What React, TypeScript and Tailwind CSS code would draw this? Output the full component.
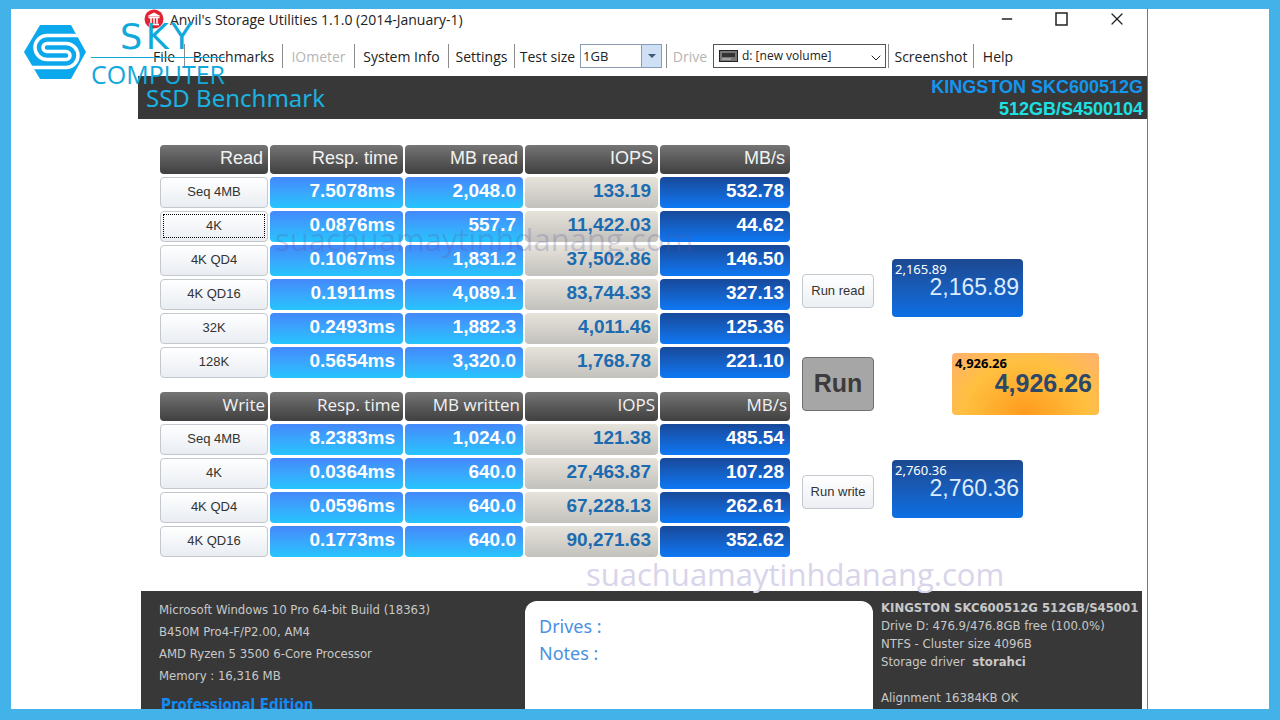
import React from 'react';
import { ChevronDown, Minus, X } from 'lucide-react';

interface ResultRow {
  test: string;
  resp: string;
  mb: string;
  iops: string;
  speed: string;
  focused?: boolean;
}

interface ResultTableProps {
  title: string;
  mbLabel: string;
  rows: ResultRow[];
  headClass: string;
}

const readRows: ResultRow[] = [
  { test: 'Seq 4MB', resp: '7.5078ms', mb: '2,048.0', iops: '133.19', speed: '532.78' },
  { test: '4K', resp: '0.0876ms', mb: '557.7', iops: '11,422.03', speed: '44.62', focused: true },
  { test: '4K QD4', resp: '0.1067ms', mb: '1,831.2', iops: '37,502.86', speed: '146.50' },
  { test: '4K QD16', resp: '0.1911ms', mb: '4,089.1', iops: '83,744.33', speed: '327.13' },
  { test: '32K', resp: '0.2493ms', mb: '1,882.3', iops: '4,011.46', speed: '125.36' },
  { test: '128K', resp: '0.5654ms', mb: '3,320.0', iops: '1,768.78', speed: '221.10' },
];

const writeRows: ResultRow[] = [
  { test: 'Seq 4MB', resp: '8.2383ms', mb: '1,024.0', iops: '121.38', speed: '485.54' },
  { test: '4K', resp: '0.0364ms', mb: '640.0', iops: '27,463.87', speed: '107.28' },
  { test: '4K QD4', resp: '0.0596ms', mb: '640.0', iops: '67,228.13', speed: '262.61' },
  { test: '4K QD16', resp: '0.1773ms', mb: '640.0', iops: '90,271.63', speed: '352.62' },
];

const Logo: React.FC = () => (
  <div className="absolute left-3 top-2 z-10 flex items-start gap-1 text-[#0fa9dc]">
    <svg viewBox="0 0 64 56" className="mt-[7px] h-14 w-16" aria-hidden="true">
      <path d="M17 1h31l15 27-15 27H17L1 28z" fill="#0ba8ee" />
      <path
        d="M58 11.5H24a12 12 0 0 0 0 24h19a4 4 0 0 0 0-8H24a4 4 0 0 1 0-8h19a12 12 0 0 1 0 24H6"
        fill="none"
        stroke="#fff"
        strokeWidth="3.5"
      />
    </svg>
    <div className="flex flex-col items-center">
      <span className="font-['DejaVu_Sans'] text-[35px] leading-10 tracking-widest">SKY</span>
      <span className="h-px w-full bg-[#0fa9dc]" />
      <span className="font-['Open_Sans'] text-[25px] leading-8">COMPUTER</span>
    </div>
  </div>
);

const TitleBar: React.FC = () => (
  <header className="flex h-5 items-center pl-1.5 pr-5">
    <svg viewBox="0 0 20 20" className="h-5 w-5" aria-hidden="true">
      <circle cx="10" cy="10" r="9.5" fill="#e02435" />
      <path d="M4.5 7 10 4l5.5 3z" fill="#fff" stroke="#fff" />
      <path d="M4.5 8.5h11M5 15.5h10M7 8v6.5M10 8v6.5M13 8v6.5" stroke="#fff" strokeWidth="1.5" />
    </svg>
    <h1 className="ml-1.5 text-[14px]">Anvil's Storage Utilities 1.1.0 (2014-January-1)</h1>
    <div className="ml-auto flex items-center gap-[38px]">
      <button aria-label="Minimize"><Minus size={16} /></button>
      <button aria-label="Maximize">
        <svg viewBox="0 0 16 16" className="h-4 w-4">
          <rect x="3" y="2" width="11" height="12" fill="none" stroke="currentColor" strokeWidth="1.5" />
        </svg>
      </button>
      <button aria-label="Close"><X size={20} strokeWidth={1.5} /></button>
    </div>
  </header>
);

const Separator: React.FC = () => <span className="h-6 w-px shrink-0 bg-[#8c8c8c]" />;

const Toolbar: React.FC = () => (
  <nav className="flex h-[47px] items-center whitespace-nowrap pl-1.5 pt-[7px] text-[14px]">
    <button className="w-10">File</button>
    <Separator />
    <button className="w-[97px]">Benchmarks</button>
    <Separator />
    <button className="w-[71px] text-[#b5b5b5]" disabled>IOmeter</button>
    <Separator />
    <button className="w-[93px]">System Info</button>
    <Separator />
    <button className="w-[65px]">Settings</button>
    <Separator />
    <label htmlFor="test-size" className="w-[65px] text-center">Test size</label>
    <div className="relative">
      <select id="test-size" className="h-6 w-[82px] appearance-none border border-[#8a9bb5] bg-white px-0.5 text-[13px] leading-5">
        <option>1GB</option>
      </select>
      <span className="pointer-events-none absolute bottom-px right-px top-px flex w-5 items-center justify-center border-l border-[#8a9bb5] bg-[#cfe0f5]">
        <svg viewBox="0 0 8 4" className="h-1 w-2"><path d="M0 0h8L4 4z" fill="#3d5878" /></svg>
      </span>
    </div>
    <span className="w-1" />
    <Separator />
    <label htmlFor="drive" className="w-[46px] text-center text-[#b5b5b5]">Drive</label>
    <div className="relative">
      <select id="drive" className="h-6 w-[173px] appearance-none border border-[#555] bg-white pl-7 text-[12px]">
        <option>d: [new volume]</option>
      </select>
      <svg viewBox="0 0 19 12" className="pointer-events-none absolute left-1.5 top-1.5 h-3 w-[19px]" aria-hidden="true">
        <rect x="0.5" y="0.5" width="18" height="11" fill="#777" stroke="#222" />
        <path d="M3 3h13v4H3z" fill="#333" />
        <path d="M3 9h9" stroke="#ccc" />
      </svg>
      <ChevronDown size={16} strokeWidth={1.5} className="pointer-events-none absolute right-0.5 top-1.5" />
    </div>
    <span className="w-0.5" />
    <Separator />
    <button className="w-[84px]">Screenshot</button>
    <Separator />
    <button className="w-12">Help</button>
  </nav>
);

const ResultTable: React.FC<ResultTableProps> = ({ title, mbLabel, rows, headClass }) => (
  <table className="w-[634px] table-fixed border-separate border-spacing-x-[2px] border-spacing-y-[3px] text-right">
    <colgroup>
      <col className="w-[108px]" />
      <col className="w-[133px]" />
      <col className="w-[118px]" />
      <col className="w-[133px]" />
      <col className="w-[130px]" />
    </colgroup>
    <thead className={headClass}>
      <tr className="h-[29px] text-[#f2f2f2]">
        {[title, 'Resp. time', mbLabel, 'IOPS', 'MB/s'].map((label) => (
          <th key={label} className="rounded-sm bg-linear-to-b from-[#757575] to-[#404040] pb-1 pl-1 text-right font-normal leading-6">
            {label}
          </th>
        ))}
      </tr>
    </thead>
    <tbody className="font-['Liberation_Sans'] text-[19px] font-bold leading-6 text-white">
      {rows.map((row) => (
        <tr key={row.test} className="h-[31px]">
          <td className="p-0">
            <button className="flex h-[31px] w-full items-center justify-center rounded-sm border border-[#c3c8ce] bg-linear-to-b from-white to-[#e9edf2] px-0.5 pb-[3px] pt-0.5 text-[13px] font-normal text-[#333]">
              <span className={row.focused ? 'flex h-full w-full items-center justify-center border border-dotted border-black' : ''}>
                {row.test}
              </span>
            </button>
          </td>
          <td className="rounded-sm bg-linear-to-b from-[#4488fb] to-[#25c4fd] py-0 pb-[3px] pr-2">{row.resp}</td>
          <td className="rounded-sm bg-linear-to-b from-[#4488fb] to-[#25c4fd] py-0 pb-[3px] pr-[7px]">{row.mb}</td>
          <td className="rounded-sm bg-linear-to-b from-[#e6e3db] to-[#c3c1bc] py-0 pb-[3px] pr-[7px] text-[#1c6bb0]">{row.iops}</td>
          <td className="rounded-sm bg-linear-to-b from-[#17499a] to-[#0b78f4] py-0 pb-[3px] pr-1.5">{row.speed}</td>
        </tr>
      ))}
    </tbody>
  </table>
);

const ScoreBox: React.FC<{ score: string }> = ({ score }) => (
  <div className="flex h-[58px] w-[131px] flex-col rounded-sm bg-linear-to-b from-[#1c4990] to-[#0a6fe4] pl-[3px] pr-1 pt-0.5 text-white">
    <span className="font-['Noto_Sans'] text-[13px] leading-4">{score}</span>
    <span className="text-right font-['Liberation_Sans'] text-[23px] leading-5 text-[#dcecff]">{score}</span>
  </div>
);

const smallButton =
  "mt-1.5 h-[34px] w-[72px] shrink-0 rounded-sm border border-[#c3c8ce] bg-linear-to-b from-white to-[#eceff3] font-['Liberation_Sans'] text-[13px] text-[#333]";

const RunPanel: React.FC = () => (
  <section className="flex flex-col pt-[117px]">
    <div className="flex items-center gap-[18px]">
      <button className={smallButton}>Run read</button>
      <ScoreBox score="2,165.89" />
    </div>
    <div className="mt-9 flex items-center gap-[78px]">
      <button className="h-[54px] w-[72px] rounded-sm border border-[#707070] bg-[#a6a6a6] font-['Liberation_Sans'] text-[25px] font-bold text-[#3c3c3c]">
        Run
      </button>
      <div className="flex h-[62px] w-[147px] flex-col rounded-sm bg-[radial-gradient(ellipse_at_bottom,#ff9a1c,#ffc040_60%,#ffb070)] px-[3px] pt-0.5">
        <span className="font-['Noto_Sans'] text-[13px] font-bold leading-4 text-black">4,926.26</span>
        <span className="pr-1 text-right font-['Liberation_Sans'] text-[25px] font-bold leading-6 text-[#2b4868]">4,926.26</span>
      </div>
    </div>
    <div className="mt-[45px] flex items-center gap-[18px]">
      <button className={smallButton}>Run write</button>
      <ScoreBox score="2,760.36" />
    </div>
  </section>
);

const SystemFooter: React.FC = () => (
  <footer className="ml-[3px] mr-[5px] flex flex-1 overflow-hidden bg-[#383838] font-['DejaVu_Sans_Condensed'] text-[13px] text-[#c8c8c8]">
    <div className="w-[384px] shrink-0 whitespace-nowrap pl-[18px] pt-2 leading-[22px]">
      <p>Microsoft Windows 10 Pro 64-bit Build (18363)</p>
      <p>B450M Pro4-F/P2.00, AM4</p>
      <p>AMD Ryzen 5 3500 6-Core Processor</p>
      <p>Memory : 16,316 MB</p>
      <p className="mt-1 pl-0.5 text-[15px] font-bold leading-7 text-[#138bf0]">Professional Edition</p>
    </div>
    <div className="mt-2.5 flex-1 rounded-t-xl bg-white px-3.5 pt-3 font-['Noto_Sans'] text-[18px] leading-[27px] text-[#4a90e2]">
      <p>Drives :</p>
      <p>Notes :</p>
    </div>
    <div className="w-[269px] shrink-0 overflow-hidden whitespace-nowrap pl-2 pt-2 leading-[18px]">
      <p className="font-bold">KINGSTON SKC600512G 512GB/S45001</p>
      <p>Drive D: 476.9/476.8GB free (100.0%)</p>
      <p>NTFS - Cluster size 4096B</p>
      <p>Storage driver &nbsp;<strong>storahci</strong></p>
      <p className="mt-[18px]">Alignment 16384KB OK</p>
    </div>
  </footer>
);

const watermark = "pointer-events-none absolute z-10 font-['Open_Sans'] text-[31px] leading-9";

export default function App() {
  return (
    <main className="relative flex h-screen min-h-[400px] overflow-hidden border-x-[11px] border-b-[11px] border-t-[9px] border-[#43b2e8] bg-white pl-[127px] pr-[121px] font-['Open_Sans',sans-serif] text-[#222]">
      <Logo />
      <div className="relative flex flex-1 flex-col border-r border-[#777]">
        <TitleBar />
        <Toolbar />
        <div className="flex h-[43px] items-center justify-between bg-[#383838] pl-2 pr-1">
          <h2 className="font-['Noto_Sans'] text-[24px] text-[#1ab2e0]">SSD Benchmark</h2>
          <div className="text-right font-['Liberation_Sans'] text-[18px] font-bold leading-[22px]">
            <p className="text-[#1496f0]">KINGSTON SKC600512G</p>
            <p className="text-[#1ce0e4]">512GB/S4500104</p>
          </div>
        </div>
        <div className="flex h-[472px] shrink-0 gap-2.5 pl-5 pt-[23px]">
          <div className="flex shrink-0 flex-col gap-2">
            <ResultTable title="Read" mbLabel="MB read" rows={readRows} headClass="font-['Liberation_Sans'] text-[18px] [&_th]:pr-[5px]" />
            <ResultTable title="Write" mbLabel="MB written" rows={writeRows} headClass="font-['Open_Sans'] text-[17px] [&_th]:pr-[3px]" />
          </div>
          <RunPanel />
        </div>
        <p className={`${watermark} left-[137px] top-[212px] text-[#5a5a9c]/25`}>suachuamaytinhdanang.com</p>
        <p className={`${watermark} left-[448px] top-[547px] text-[#d8d4ea]`}>suachuamaytinhdanang.com</p>
        <SystemFooter />
      </div>
    </main>
  );
}
